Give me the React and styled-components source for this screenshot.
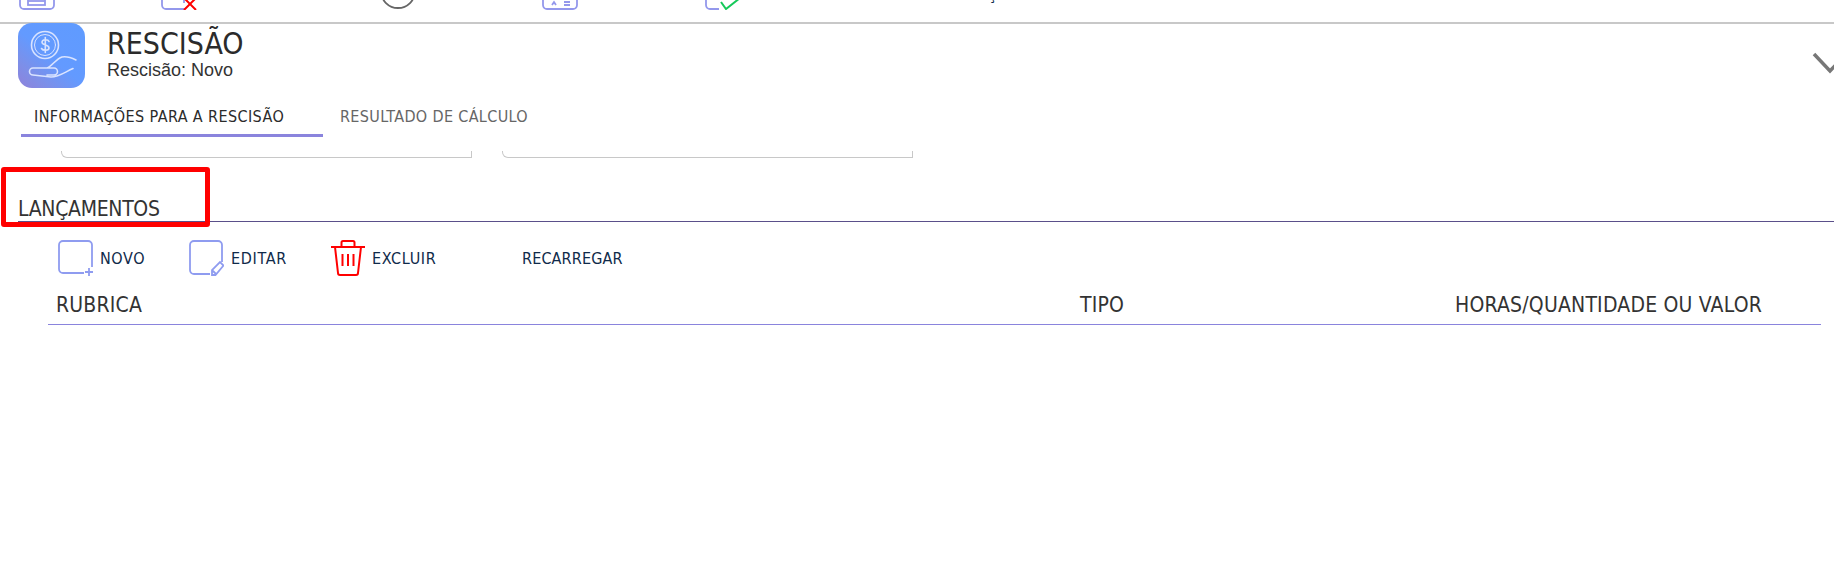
import React from "react";
import styled, { createGlobalStyle } from "styled-components";

const GlobalStyle = createGlobalStyle`
  html, body {
    margin: 0;
    padding: 0;
    background: #fff;
    overflow: hidden;
  }
`;

const Page = styled.div`
  position: relative;
  width: 1834px;
  height: 573px;
  overflow: hidden;
  font-family: "DejaVu Sans Condensed", "DejaVu Sans", sans-serif;
  font-stretch: condensed;
  color: #333;
`;

const TopBar = styled.div`
  height: 22px;
  border-bottom: 2px solid #c8c8c8;
  overflow: hidden;
  display: flex;
  align-items: flex-end;
`;

const TopIcon = styled.svg`
  flex: none;
  width: 36px;
  height: 36px;
  margin-bottom: 12px;
  margin-left: ${(p) => p.$left}px;
`;

const TopLabel = styled.span`
  margin-left: 246px;
  font-size: 16px;
  line-height: 16px;
  margin-bottom: 19px;
  color: #0f2a4a;
`;

const Header = styled.div`
  display: flex;
  height: 65px;
  padding-left: 18px;
`;

const Logo = styled.div`
  width: 67px;
  height: 65px;
  margin-top: -1px;
  border-radius: 14px;
  background: linear-gradient(40deg, #8f82da 0%, #7d8fe8 22%, #639aff 48%, #5f9bff 100%);
`;

const Titles = styled.div`
  margin-left: 22px;
  padding-top: 2px;
`;

const Title = styled.div`
  font-size: 30px;
  line-height: 36px;
  color: #2b2b2b;
`;

const Subtitle = styled.div`
  font-family: "Liberation Sans", sans-serif;
  font-size: 18px;
  line-height: 18px;
  margin-top: -1px;
`;

const Chevron = styled.svg`
  position: absolute;
  left: 1810px;
  top: 50px;
`;

const Tabs = styled.div`
  display: flex;
  margin: 9px 0 0 21px;
`;

const Tab = styled.div`
  width: ${(p) => p.$w}px;
  height: 39px;
  padding-left: ${(p) => p.$pad}px;
  box-sizing: border-box;
  font-size: 16px;
  letter-spacing: ${(p) => (p.$active ? 0.4 : 0.35)}px;
  line-height: 38px;
  color: ${(p) => (p.$active ? "#2b2b2b" : "#666")};
  border-bottom: ${(p) => (p.$active ? "3px solid #8a84dd" : "none")};
`;

const Fields = styled.div`
  display: flex;
  margin-top: 14px;
  height: 7px;
  padding-left: 61px;
  gap: 30px;
`;

const Field = styled.div`
  width: ${(p) => p.$w}px;
  box-sizing: border-box;
  border: 1px solid #c8c8c8;
  border-top: none;
  border-bottom-left-radius: 6px;
`;

const Section = styled.div`
  margin: 35px 0 0 18px;
  border-bottom: 1px solid #5a4f8a;
  height: 28px;
  font-size: 21px;
  letter-spacing: -0.3px;
  line-height: 32px;
`;

const Toolbar = styled.div`
  display: flex;
  align-items: center;
  height: 72px;
  padding-left: 58px;
`;

const ToolButton = styled.div`
  display: flex;
  align-items: center;
  gap: 7px;
  width: ${(p) => p.$w}px;
  font-size: 16px;
  letter-spacing: ${(p) => p.$ls || 0.15}px;
  color: #0f2a4a;
`;

const HeadRow = styled.div`
  display: grid;
  grid-template-columns: 1024px 375px 1fr;
  margin: 0 13px 0 48px;
  padding-left: 8px;
  height: 31px;
  box-sizing: border-box;
  border-bottom: 1px solid #8a84dd;
  font-size: 21px;
  letter-spacing: 0.2px;
  line-height: 23px;
`;

const Marker = styled.div`
  position: absolute;
  left: 1px;
  top: 167px;
  width: 209px;
  height: 60px;
  box-sizing: border-box;
  border: 5px solid #ff0000;
  border-radius: 3px;
`;

export default function App() {
  return (
    <Page>
      <GlobalStyle />
      <TopBar>
        <TopIcon $left={19} viewBox="0 0 36 36" fill="none" stroke="#9498ec" strokeWidth="1.8">
          <rect x="1" y="1" width="34" height="34" rx="4" />
          <rect x="9" y="20" width="17" height="11" />
          <path d="M9 27h17" />
        </TopIcon>
        <TopIcon $left={106} viewBox="0 0 36 36" fill="none" strokeWidth="1.8">
          <path d="M24 35H5a4 4 0 0 1-4-4V1M9 20h14v9" stroke="#9498ec" />
          <path d="M23 24l12 12M35 24L23 36" stroke="#f00" strokeWidth="2" />
        </TopIcon>
        <TopIcon $left={183} viewBox="0 0 36 36" fill="none" stroke="#666" strokeWidth="1.8">
          <circle cx="18" cy="17" r="17" />
        </TopIcon>
        <TopIcon $left={126} viewBox="0 0 36 36" fill="none" stroke="#9498ec" strokeWidth="1.8">
          <rect x="1" y="1" width="34" height="34" rx="4" />
          <path d="M10 31l2-3 2 3M22 28h6M22 31h6" />
        </TopIcon>
        <TopIcon $left={127} viewBox="0 0 36 36" fill="none" strokeWidth="1.8">
          <path d="M14 35H5a4 4 0 0 1-4-4V1" stroke="#9498ec" />
          <path d="M16 28l5 7 14-11" stroke="#16c95a" strokeWidth="2" />
        </TopIcon>
        <TopLabel>Ç</TopLabel>
      </TopBar>
      <Header>
        <Logo>
          <svg width="67" height="65" viewBox="0 0 67 65" fill="none" stroke="#d9e3ff" strokeWidth="1.6" strokeLinecap="round">
            <circle cx="27" cy="22" r="13.500" />
            <circle cx="27" cy="22" r="10.500" strokeWidth="1" />
            <path d="M31 18.500c-1-2.500-7-2.500-7 .8s7 2.200 7 5.700c0 3-6 3-7.500.5M27.300 14.500v15" />
            <path d="M29 45c5-2 9-9 15-11 5-1 10 1 14 3M15 45h21a3.500 3.500 0 0 1 0 7H29M15 45a3.500 3.500 0 0 0 0 7l18 2c8 0 14-5 22-8.500" />
          </svg>
        </Logo>
        <Titles>
          <Title>RESCISÃO</Title>
          <Subtitle>Rescisão: Novo</Subtitle>
        </Titles>
      </Header>
      <Chevron width="24" height="26" viewBox="0 0 24 26" fill="none" stroke="#777" strokeWidth="3.500">
        <path d="M4 4l16 17 16-17" />
      </Chevron>
      <Tabs>
        <Tab $active $w={302} $pad={13}>INFORMAÇÕES PARA A RESCISÃO</Tab>
        <Tab $w={300} $pad={17}>RESULTADO DE CÁLCULO</Tab>
      </Tabs>
      <Fields>
        <Field $w={411} />
        <Field $w={411} />
      </Fields>
      <Section>LANÇAMENTOS</Section>
      <Toolbar>
        <ToolButton $w={131} $ls={0.6}>
          <svg width="35" height="36" viewBox="0 0 35 36" fill="none" stroke="#8f9cf0" strokeWidth="1.800">
            <path d="M26 33H5a4 4 0 0 1-4-4V5a4 4 0 0 1 4-4h25a4 4 0 0 1 4 4v22M27 32h8M31 28v8" />
          </svg>
          NOVO
        </ToolButton>
        <ToolButton $w={142} $ls={0.7}>
          <svg width="35" height="36" viewBox="0 0 35 36" fill="none" stroke="#8f9cf0" strokeWidth="1.800">
            <path d="M21 34H5a4 4 0 0 1-4-4V5a4 4 0 0 1 4-4h24a4 4 0 0 1 4 4v17" />
            <path d="M23 35v-5l8-8 3.500 3.500-8 9.500zM23 30l4 4" />
          </svg>
          EDITAR
        </ToolButton>
        <ToolButton $w={191} $ls={0.65}>
          <svg width="34" height="36" viewBox="0 0 34 36" fill="none" stroke="#f00" strokeWidth="2">
            <path d="M0 7h34M10.500 6V2.500a1.500 1.500 0 0 1 1.500-1.500h10a1.500 1.500 0 0 1 1.500 1.500V6M4 7l3 26a2 2 0 0 0 2 2h16a2 2 0 0 0 2-2l3-26M11.500 14v12M17 14v12M22.500 14v12" />
          </svg>
          EXCLUIR
        </ToolButton>
        <ToolButton>RECARREGAR</ToolButton>
      </Toolbar>
      <HeadRow>
        <span>RUBRICA</span>
        <span>TIPO</span>
        <span>HORAS/QUANTIDADE OU VALOR</span>
      </HeadRow>
      <Marker />
    </Page>
  );
}
